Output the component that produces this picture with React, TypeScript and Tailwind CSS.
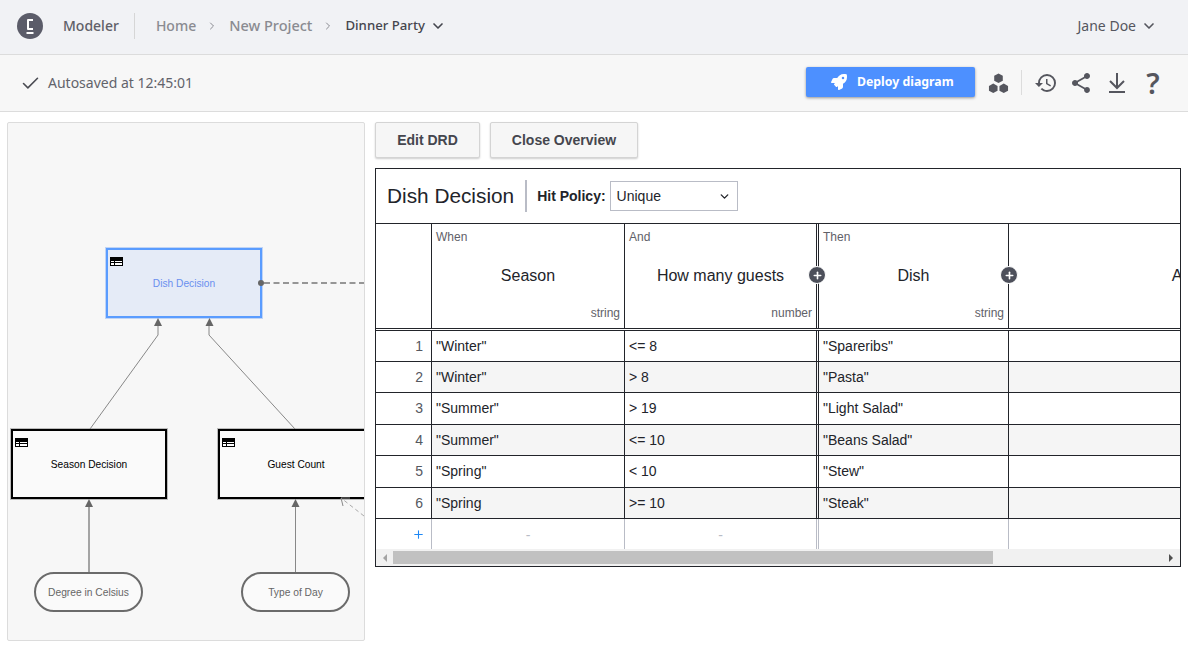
import { ChevronDown, ChevronRight, Check, Plus } from "lucide-react";
import { FaRocket } from "react-icons/fa";
import { MdHistory, MdShare } from "react-icons/md";

const rows = [
  { n: 1, a: '"Winter"', b: "<= 8", c: '"Spareribs"', h: "h-[32px]" },
  { n: 2, a: '"Winter"', b: "> 8", c: '"Pasta"', h: "h-[31px]" },
  { n: 3, a: '"Summer"', b: "> 19", c: '"Light Salad"', h: "h-[32px]" },
  { n: 4, a: '"Summer"', b: "<= 10", c: '"Beans Salad"', h: "h-[31px]" },
  { n: 5, a: '"Spring"', b: "< 10", c: '"Stew"', h: "h-[32px]" },
  { n: 6, a: '"Spring', b: ">= 10", c: '"Steak"', h: "h-[31px]" },
];

function TableIcon() {
  return (
    <div className="absolute left-[2px] top-[7px] w-[13px] h-[9px] border border-black bg-white">
      <div className="h-[3px] bg-black" />
      <div className="h-px mt-[1px] bg-black" />
      <div className="absolute left-[3px] top-[3px] w-px h-[4px] bg-black" />
    </div>
  );
}

function Decision({ label, className, active }: { label: string; className: string; active?: boolean }) {
  return (
    <div
      className={`absolute w-[156px] h-[70px] flex items-center justify-center pt-[1px] text-[10.200px] ${
        active
          ? "border-2 border-[#5a9cff] bg-[#e5ebf7] text-[#6a8fef] outline outline-1 outline-[#c0d4f5]"
          : "border-2 border-black bg-[#fafafa] text-black outline outline-1 outline-[#bbbbbb]"
      } ${className}`}
    >
      <TableIcon />
      {label}
    </div>
  );
}

function Input({ label, className }: { label: string; className: string }) {
  return (
    <div
      className={`absolute w-[109px] h-[40px] rounded-[20px] border-2 border-[#6b6b6b] bg-[#fafafa] flex items-center justify-center pt-[2px] text-[10.250px] text-[#666666] ${className}`}
    >
      {label}
    </div>
  );
}

function Diagram() {
  return (
    <div className="relative w-[358px] h-[519px] shrink-0 overflow-hidden rounded-[2px] border border-[#dcdcdc] bg-[#f7f7f7] font-['Liberation_Sans',sans-serif]">
      <Decision label="Dish Decision" active className="left-[98px] top-[125px]" />
      <Decision label="Season Decision" className="left-[3px] top-[306px]" />
      <Decision label="Guest Count" className="left-[210px] top-[306px]" />
      <Input label="Degree in Celsius" className="left-[26px] top-[449px]" />
      <Input label="Type of Day" className="left-[233px] top-[449px]" />
      <svg className="absolute left-0 top-0 pointer-events-none" width="358" height="519" fill="none">
        <g stroke="#888888" strokeWidth="1">
          <path d="M82 306 L150 212 V200" />
          <path d="M287 306 L201 212 V200" />
          <path d="M81 449 V380" strokeWidth="1.500" />
          <path d="M287.500 449 V380" />
        </g>
        <g fill="#666666">
          <path d="M150 195 L154 203 H146 Z" />
          <path d="M201.500 195 L205.500 203 H197.500 Z" />
          <path d="M81 376 L85 384 H77 Z" />
          <path d="M287.500 376 L291.500 384 H283.500 Z" />
          <circle cx="253" cy="160" r="3" />
        </g>
        <path d="M256 160 H358" stroke="#777777" strokeWidth="1.500" strokeDasharray="6 3.500" />
        <path d="M356 393 L333 375" stroke="#aaaaaa" strokeWidth="1" strokeDasharray="4 3" />
        <path d="M342 375 H333 L335 383" stroke="#888888" strokeWidth="1" />
      </svg>
    </div>
  );
}

function AddColumn({ className }: { className: string }) {
  return (
    <div className={`absolute top-[42px] w-[16px] h-[16px] rounded-full bg-[#4d505b] border border-white box-content flex items-center justify-center z-10 ${className}`}>
      <Plus size={11} strokeWidth={3.500} className="text-white" />
    </div>
  );
}

function DecisionTable() {
  return (
    <div className="h-[399px] w-[806px] border border-[#22242a] bg-white flex flex-col overflow-hidden font-['Liberation_Sans',sans-serif] text-[#22242a]">
      <div className="h-[55px] shrink-0 border-b border-[#22242a] flex items-center pl-[11px]">
        <span className="text-[20.800px] leading-none pr-[11px] mr-[10px] h-[32px] flex items-center border-r-2 border-[#b9bcc6]">Dish Decision</span>
        <span className="text-[14px] font-bold mr-[4px]">Hit Policy:</span>
        <div className="w-[128px] h-[30px] border border-[#b9bcc6] flex items-center justify-between pl-[6px] pr-[6px] text-[14px]">
          Unique
          <ChevronDown size={13} strokeWidth={2.500} />
        </div>
      </div>

      <div className="relative h-[105px] shrink-0 flex border-b border-[#22242a]">
        <div className="w-[56px] shrink-0 border-r border-[#22242a]" />
        <div className="relative w-[193px] shrink-0 border-r border-[#22242a]">
          <span className="absolute left-[4px] top-[4px] text-[12px] text-[#5f6168]">When</span>
          <span className="absolute inset-x-0 top-[40px] text-center text-[16px]">Season</span>
          <span className="absolute right-[4px] bottom-[6px] text-[12px] text-[#5f6168]">string</span>
        </div>
        <div className="relative w-[192px] shrink-0 border-r border-[#22242a]">
          <span className="absolute left-[4px] top-[4px] text-[12px] text-[#5f6168]">And</span>
          <span className="absolute inset-x-0 top-[40px] text-center text-[16px]">How many guests</span>
          <span className="absolute right-[4px] bottom-[6px] text-[12px] text-[#5f6168]">number</span>
        </div>
        <div className="relative w-[191px] shrink-0 border-l border-r border-[#22242a] ml-[1px]">
          <span className="absolute left-[4px] top-[4px] text-[12px] text-[#5f6168]">Then</span>
          <span className="absolute inset-x-0 top-[40px] text-center text-[16px]">Dish</span>
          <span className="absolute right-[4px] bottom-[6px] text-[12px] text-[#5f6168]">string</span>
        </div>
        <div className="relative w-[402px] shrink-0">
          <span className="absolute inset-x-0 top-[40px] text-center text-[16px]">Annotation</span>
        </div>
        <AddColumn className="left-[432px]" />
        <AddColumn className="left-[624px]" />
      </div>

      {rows.map((r) => (
        <div key={r.n} className={`flex shrink-0 border-b border-[#22242a] text-[14px] ${r.h} ${r.n % 2 === 0 ? "bg-[#f5f5f5]" : ""} ${r.n === 1 ? "border-t border-t-[#22242a] mt-[1px]" : ""}`}>
          <div className="w-[56px] shrink-0 border-r border-[#22242a] bg-white pr-[8px] text-[#55585f] flex items-center justify-end">{r.n}</div>
          <div className="w-[193px] shrink-0 border-r border-[#22242a] pl-[4px] flex items-center">{r.a}</div>
          <div className="w-[192px] shrink-0 border-r border-[#22242a] pl-[4px] flex items-center">{r.b}</div>
          <div className="w-[191px] shrink-0 ml-[1px] border-l border-r border-[#22242a] pl-[4px] flex items-center">{r.c}</div>
        </div>
      ))}

      <div className="flex flex-1 text-[14px] text-[#b9bcc6]">
        <div className="w-[56px] shrink-0 border-r border-[#b9bcc6] flex items-center justify-end pr-[6px] text-[#1e88f5]">
          <Plus size={13} strokeWidth={2} />
        </div>
        <div className="w-[193px] shrink-0 border-r border-[#b9bcc6] flex items-center justify-center pt-[2px]">-</div>
        <div className="w-[192px] shrink-0 border-r border-[#b9bcc6] flex items-center justify-center pt-[2px]">-</div>
        <div className="w-[191px] shrink-0 ml-[1px] border-l border-r border-[#b9bcc6]" />
      </div>

      <div className="h-[17px] shrink-0 bg-[#f1f1f1] flex items-center px-[7px]">
        <div className="w-0 h-0 border-y-[4px] border-y-transparent border-r-[4px] border-r-[#a3a3a3]" />
        <div className="w-[600px] h-[13px] bg-[#c1c1c1] ml-[6px]" />
        <div className="ml-auto w-0 h-0 border-y-[4px] border-y-transparent border-l-[4px] border-l-[#505050]" />
      </div>
    </div>
  );
}

export default function App() {
  return (
    <div className="w-[1188px] h-[647px] overflow-hidden bg-white font-['Noto_Sans',sans-serif]">
      <header className="h-[55px] bg-[#f1f2f5] border-b border-[#dcdcdc] flex items-center pb-[3px] pl-[17px] pr-[31px] text-[14px]">
        <svg width="26" height="26" viewBox="0 0 26 26" className="shrink-0">
          <circle cx="13" cy="13" r="13" fill="#5b5c69" />
          <path d="M16 7 H11 V16 H16" fill="none" stroke="#ffffff" strokeWidth="2" strokeLinejoin="round" />
          <path d="M9.500 20 H16.500" fill="none" stroke="#ffffff" strokeWidth="2" />
        </svg>
        <span className="ml-[20px] pr-[15px] h-[26px] flex items-center border-r border-[#d6d6d6] font-medium text-[#5f6068]">Modeler</span>
        <span className="ml-[21px] text-[#8a8b91] font-medium">Home</span>
        <ChevronRight size={12} className="ml-[10px] mr-[11px] text-[#8a8b91]" />
        <span className="text-[#8a8b91] font-medium text-[14.500px]">New Project</span>
        <ChevronRight size={12} className="ml-[10px] mr-[11px] text-[#8a8b91]" />
        <span className="text-[#45464e] font-medium text-[13.200px]">Dinner Party</span>
        <ChevronDown size={16} strokeWidth={2.500} className="ml-[5px] text-[#45464e]" />
        <span className="ml-auto text-[#55565e]">Jane Doe</span>
        <ChevronDown size={16} strokeWidth={2.500} className="ml-[5px] text-[#55565e]" />
      </header>

      <div className="h-[57px] bg-[#f7f7f7] border-b border-[#dcdcdc] flex items-center pl-[20px] pr-[27px] text-[14px] text-[#62636b]">
        <Check size={21} strokeWidth={1.800} className="text-[#4a4b52]" />
        <span className="ml-[7px] mt-[-1px]">Autosaved at 12:45:01</span>
        <button className="ml-auto w-[169px] h-[30px] rounded-[2px] bg-[#4d90ff] shadow-[0_1px_3px_rgba(0,0,0,0.4)] text-white font-bold text-[12.300px] flex items-center justify-start pl-[25px] gap-[10px] pt-[1px] mt-[-3px]">
          <FaRocket size={16} />
          Deploy diagram
        </button>
        <svg className="ml-[13px] shrink-0" width="21" height="21" viewBox="0 0 22 21" fill="#55565e">
          <path d="M11 0 L15.500 2.500 V7.500 L11 10 L6.500 7.500 V2.500 Z" />
          <path d="M5.500 10.500 L10 13 V18 L5.500 20.500 L1 18 V13 Z" />
          <path d="M16.500 10.500 L21 13 V18 L16.500 20.500 L12 18 V13 Z" />
        </svg>
        <div className="ml-[12px] w-px h-[25px] mt-[-2px] bg-[#dcdcdc]" />
        <MdHistory size={24} className="ml-[12px] shrink-0 text-[#55565e]" />
        <MdShare size={24} className="ml-[11px] shrink-0 text-[#55565e]" />
        <svg className="ml-[15px] shrink-0" width="18" height="20" viewBox="0 0 18 20" fill="none" stroke="#55565e" strokeWidth="2">
          <path d="M9 0 V14 M2 8 L9 15 L16 8" />
          <path d="M1 19 H17" />
        </svg>
        <span className="ml-[19px] mt-[-2px] w-[16px] text-[29px] font-semibold leading-none text-center text-[#55565e]">?</span>
      </div>

      <main className="flex gap-[10px] pl-[7px] pt-[10px]">
        <Diagram />
        <div className="flex flex-col">
          <div className="flex gap-[10px] h-[46px]">
            <button className="w-[105px] h-[36px] border border-[#d4d4d4] rounded-[2px] bg-[#f6f6f6] shadow-[0_1px_2px_rgba(0,0,0,0.2)] text-[14px] font-bold text-[#45464e] font-['Liberation_Sans',sans-serif]">Edit DRD</button>
            <button className="w-[148px] h-[36px] border border-[#d4d4d4] rounded-[2px] bg-[#f6f6f6] shadow-[0_1px_2px_rgba(0,0,0,0.2)] text-[14px] font-bold text-[#45464e] font-['Liberation_Sans',sans-serif]">Close Overview</button>
          </div>
          <DecisionTable />
        </div>
      </main>
    </div>
  );
}
